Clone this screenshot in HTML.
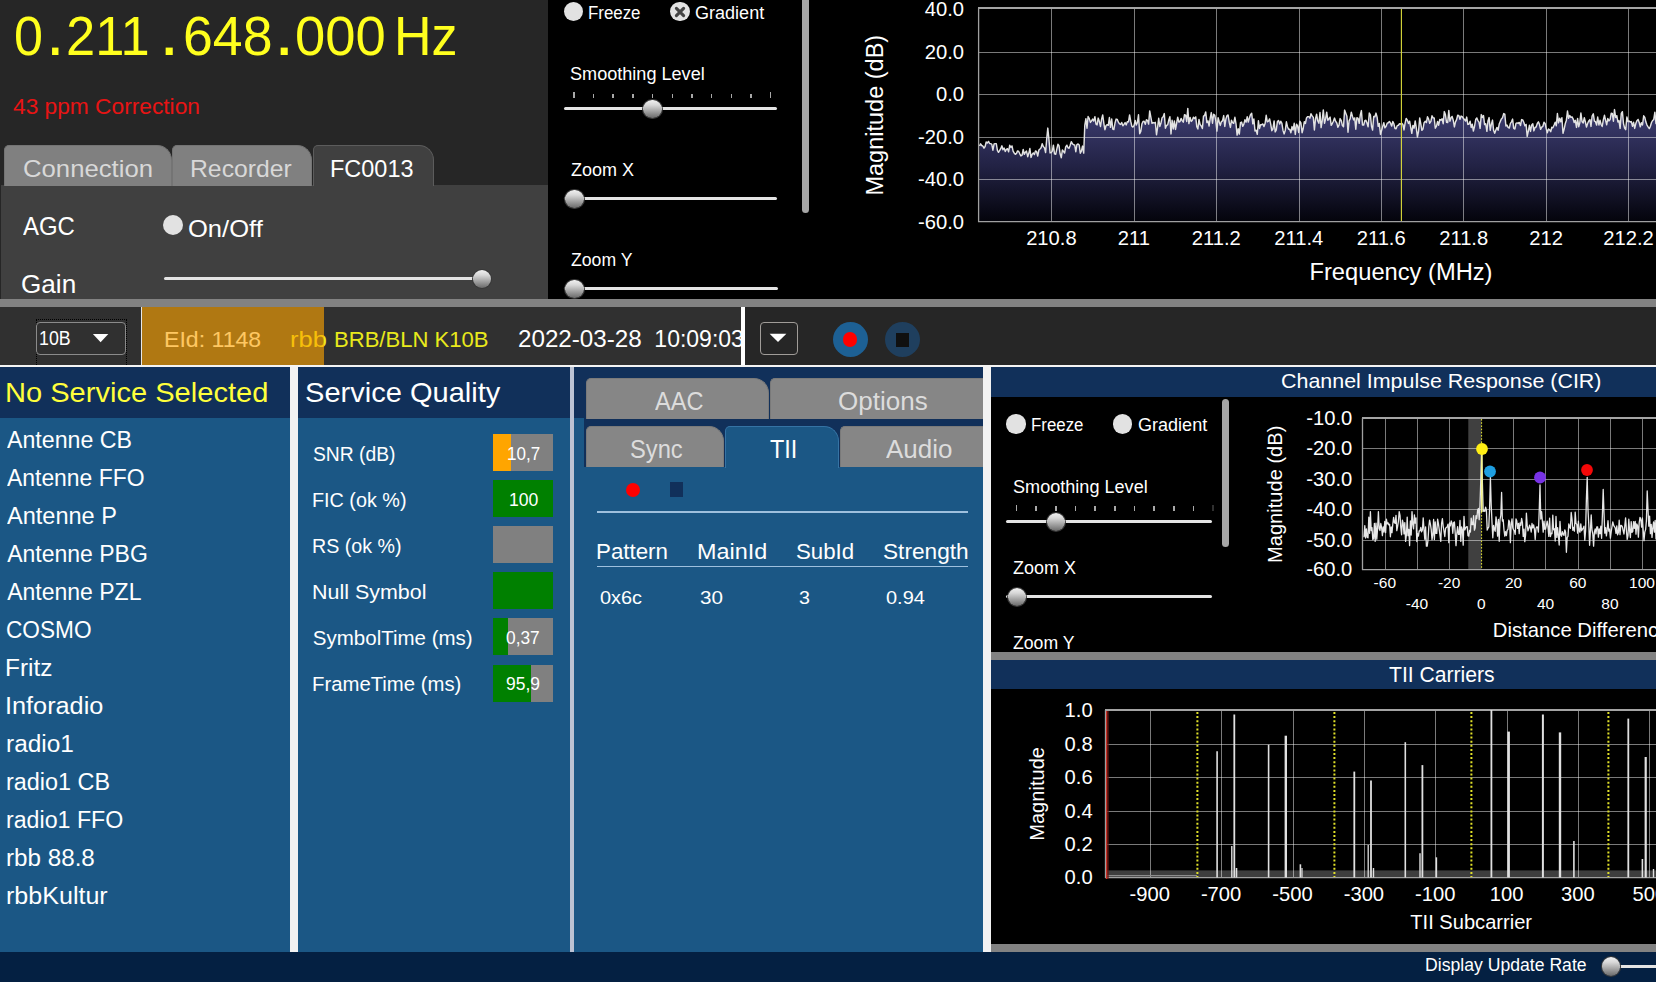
<!DOCTYPE html>
<html lang="en"><head><meta charset="utf-8"><title>DAB Radio</title><style>
html,body{margin:0;padding:0}
body{width:1656px;height:982px;position:relative;overflow:hidden;background:#000;font-family:"Liberation Sans",sans-serif;color:#fff}
.tab{position:absolute;box-sizing:border-box;background:#808080;border:1px solid #747474;border-bottom:none;border-radius:5px 15px 0 0}
.tab.b{background:#868686;border-color:#7a7a7a}
.thumb{position:absolute;border-radius:50%;background:linear-gradient(180deg,#f0f0f0 0%,#d8d8d8 28%,#a4a4a4 62%,#6a6a6a 100%);box-shadow:0 0 0 1px #383838}
svg text{font-family:"Liberation Sans",sans-serif;fill:#fff}
</style></head>
<body>
<svg style="position:absolute;left:0;top:0" width="1656" height="982" viewBox="0 0 1656 982">
<defs><linearGradient id="sg" x1="0" y1="112" x2="0" y2="221" gradientUnits="userSpaceOnUse"><stop offset="0" stop-color="#3c3c70"/><stop offset="0.5" stop-color="#222244"/><stop offset="1" stop-color="#04040c"/></linearGradient><clipPath id="c1"><rect x="979" y="8" width="680" height="213"/></clipPath></defs>
<path d="M979.5 146.0 L980.6 143.8 L981.7 145.5 L982.9 146.2 L984.0 148.2 L985.1 146.5 L986.2 142.0 L987.3 143.0 L988.5 141.4 L989.6 143.5 L990.7 143.6 L991.8 144.3 L992.9 150.2 L994.1 144.0 L995.2 143.6 L996.3 143.6 L997.4 150.4 L998.5 152.3 L999.7 150.3 L1000.8 148.5 L1001.9 145.8 L1003.0 149.7 L1004.1 148.1 L1005.3 151.4 L1006.4 149.4 L1007.5 148.7 L1008.6 151.8 L1009.7 145.3 L1010.9 147.4 L1012.0 145.9 L1013.1 151.2 L1014.2 153.0 L1015.3 154.3 L1016.5 153.4 L1017.6 150.9 L1018.7 151.5 L1019.8 153.8 L1020.9 155.9 L1022.1 155.1 L1023.2 149.5 L1024.3 154.3 L1025.4 152.2 L1026.5 151.1 L1027.7 156.7 L1028.8 153.3 L1029.9 148.5 L1031.0 157.4 L1032.1 154.4 L1033.3 152.9 L1034.4 154.6 L1035.5 150.9 L1036.6 151.7 L1037.7 156.1 L1038.9 150.0 L1040.0 148.9 L1041.1 147.7 L1042.2 143.7 L1043.3 146.5 L1044.5 147.9 L1045.6 152.5 L1046.7 139.1 L1047.8 128.1 L1048.9 139.1 L1050.1 152.9 L1051.2 152.6 L1052.3 151.1 L1053.4 145.2 L1054.5 153.9 L1055.7 154.3 L1056.8 149.2 L1057.9 144.3 L1059.0 145.7 L1060.1 153.8 L1061.3 157.7 L1062.4 149.9 L1063.5 151.4 L1064.6 153.0 L1065.7 147.0 L1066.9 145.2 L1068.0 147.8 L1069.1 148.2 L1070.2 145.3 L1071.3 141.7 L1072.5 143.9 L1073.6 144.8 L1074.7 145.0 L1075.8 151.7 L1076.9 144.6 L1078.1 143.9 L1079.2 145.1 L1080.3 153.2 L1081.4 151.1 L1082.5 146.1 L1083.7 153.1 L1084.8 125.3 L1085.9 118.7 L1087.0 128.2 L1088.1 116.5 L1089.3 118.6 L1090.4 122.4 L1091.5 121.0 L1092.6 119.1 L1093.7 121.1 L1094.9 116.7 L1096.0 124.2 L1097.1 124.9 L1098.2 118.1 L1099.3 121.3 L1100.5 126.5 L1101.6 119.1 L1102.7 114.9 L1103.8 123.1 L1104.9 129.7 L1106.1 125.5 L1107.2 124.7 L1108.3 125.3 L1109.4 117.5 L1110.5 127.3 L1111.7 119.0 L1112.8 129.1 L1113.9 129.5 L1115.0 123.0 L1116.1 119.1 L1117.3 119.5 L1118.4 122.2 L1119.5 123.9 L1120.6 124.4 L1121.7 122.5 L1122.9 125.7 L1124.0 124.4 L1125.1 122.6 L1126.2 124.9 L1127.3 121.8 L1128.5 121.9 L1129.6 114.9 L1130.7 121.2 L1131.8 126.2 L1132.9 127.1 L1134.1 125.4 L1135.2 120.4 L1136.3 125.0 L1137.4 122.5 L1138.5 114.8 L1139.7 133.7 L1140.8 131.4 L1141.9 124.1 L1143.0 121.4 L1144.1 121.3 L1145.3 124.3 L1146.4 119.8 L1147.5 120.3 L1148.6 124.1 L1149.7 110.9 L1150.9 117.4 L1152.0 123.3 L1153.1 122.6 L1154.2 123.0 L1155.3 122.3 L1156.5 134.8 L1157.6 127.3 L1158.7 118.3 L1159.8 126.5 L1160.9 123.3 L1162.1 117.7 L1163.2 116.8 L1164.3 113.6 L1165.4 128.2 L1166.5 125.4 L1167.7 124.8 L1168.8 120.0 L1169.9 116.7 L1171.0 133.9 L1172.1 120.3 L1173.3 129.0 L1174.4 121.0 L1175.5 129.4 L1176.6 123.5 L1177.7 117.2 L1178.9 122.0 L1180.0 121.5 L1181.1 118.4 L1182.2 120.6 L1183.3 122.2 L1184.5 114.7 L1185.6 115.1 L1186.7 121.5 L1187.8 108.4 L1188.9 123.6 L1190.1 117.4 L1191.2 121.4 L1192.3 120.3 L1193.4 117.2 L1194.5 118.6 L1195.7 116.9 L1196.8 126.7 L1197.9 129.0 L1199.0 119.4 L1200.1 124.5 L1201.3 126.0 L1202.4 128.5 L1203.5 116.1 L1204.6 115.5 L1205.7 111.9 L1206.9 122.6 L1208.0 120.9 L1209.1 126.0 L1210.2 118.3 L1211.3 112.6 L1212.5 123.2 L1213.6 114.3 L1214.7 115.0 L1215.8 120.9 L1216.9 131.1 L1218.1 117.7 L1219.2 121.8 L1220.3 125.4 L1221.4 121.6 L1222.5 120.8 L1223.7 115.6 L1224.8 126.4 L1225.9 119.0 L1227.0 115.6 L1228.1 115.0 L1229.3 122.7 L1230.4 127.4 L1231.5 120.2 L1232.6 122.7 L1233.7 123.3 L1234.9 117.3 L1236.0 123.8 L1237.1 135.1 L1238.2 128.8 L1239.3 134.1 L1240.5 122.6 L1241.6 122.1 L1242.7 126.3 L1243.8 124.4 L1244.9 119.8 L1246.1 122.2 L1247.2 116.8 L1248.3 122.0 L1249.4 117.9 L1250.5 114.7 L1251.7 113.3 L1252.8 123.8 L1253.9 119.0 L1255.0 131.0 L1256.1 130.2 L1257.3 134.3 L1258.4 120.8 L1259.5 128.5 L1260.6 124.7 L1261.7 124.7 L1262.9 124.0 L1264.0 126.6 L1265.1 123.5 L1266.2 115.3 L1267.3 121.8 L1268.5 121.2 L1269.6 118.9 L1270.7 124.2 L1271.8 130.7 L1272.9 129.0 L1274.1 120.9 L1275.2 131.9 L1276.3 129.8 L1277.4 121.6 L1278.5 120.6 L1279.7 124.1 L1280.8 121.2 L1281.9 123.4 L1283.0 130.4 L1284.1 133.9 L1285.3 130.3 L1286.4 121.8 L1287.5 126.7 L1288.6 129.3 L1289.7 129.2 L1290.9 132.7 L1292.0 126.6 L1293.1 130.0 L1294.2 123.3 L1295.3 134.4 L1296.5 124.2 L1297.6 126.0 L1298.7 132.5 L1299.8 121.2 L1300.9 123.0 L1302.1 132.7 L1303.2 128.5 L1304.3 121.7 L1305.4 123.5 L1306.5 117.9 L1307.7 116.6 L1308.8 116.6 L1309.9 118.2 L1311.0 113.8 L1312.1 115.9 L1313.3 117.4 L1314.4 130.0 L1315.5 118.9 L1316.6 114.2 L1317.7 120.8 L1318.9 123.3 L1320.0 112.5 L1321.1 127.6 L1322.2 120.8 L1323.3 109.9 L1324.5 123.2 L1325.6 118.9 L1326.7 112.2 L1327.8 120.2 L1328.9 119.0 L1330.1 117.1 L1331.2 125.3 L1332.3 123.5 L1333.4 121.2 L1334.5 118.1 L1335.7 121.4 L1336.8 123.0 L1337.9 127.3 L1339.0 125.1 L1340.1 118.6 L1341.3 120.6 L1342.4 125.6 L1343.5 126.7 L1344.6 110.1 L1345.7 113.1 L1346.9 116.2 L1348.0 132.3 L1349.1 120.9 L1350.2 118.6 L1351.3 112.2 L1352.5 116.5 L1353.6 119.9 L1354.7 117.9 L1355.8 129.2 L1356.9 117.7 L1358.1 118.3 L1359.2 123.3 L1360.3 115.0 L1361.4 110.6 L1362.5 125.0 L1363.7 125.1 L1364.8 120.7 L1365.9 120.3 L1367.0 123.1 L1368.1 126.7 L1369.3 113.0 L1370.4 114.9 L1371.5 126.2 L1372.6 130.0 L1373.7 116.5 L1374.9 116.8 L1376.0 113.1 L1377.1 117.1 L1378.2 126.4 L1379.3 123.4 L1380.5 134.4 L1381.6 130.5 L1382.7 126.4 L1383.8 122.7 L1384.9 127.8 L1386.1 126.3 L1387.2 123.2 L1388.3 122.8 L1389.4 121.5 L1390.5 123.2 L1391.7 126.1 L1392.8 121.5 L1393.9 123.8 L1395.0 128.5 L1396.1 128.7 L1397.3 125.6 L1398.4 125.3 L1399.5 123.8 L1400.6 124.1 L1401.7 123.2 L1402.9 124.4 L1404.0 129.9 L1405.1 123.2 L1406.2 118.4 L1407.3 120.1 L1408.5 123.4 L1409.6 121.2 L1410.7 127.3 L1411.8 133.3 L1412.9 125.4 L1414.1 128.2 L1415.2 120.9 L1416.3 127.8 L1417.4 137.0 L1418.5 131.7 L1419.7 118.0 L1420.8 124.0 L1421.9 130.3 L1423.0 129.0 L1424.1 122.7 L1425.3 121.3 L1426.4 122.6 L1427.5 116.7 L1428.6 119.1 L1429.7 123.2 L1430.9 121.3 L1432.0 115.8 L1433.1 117.8 L1434.2 118.0 L1435.3 128.2 L1436.5 126.2 L1437.6 121.5 L1438.7 125.2 L1439.8 119.5 L1440.9 120.2 L1442.1 118.8 L1443.2 123.7 L1444.3 111.6 L1445.4 114.6 L1446.5 122.2 L1447.7 122.5 L1448.8 110.4 L1449.9 121.2 L1451.0 117.9 L1452.1 116.4 L1453.3 120.5 L1454.4 126.9 L1455.5 121.9 L1456.6 119.6 L1457.7 115.2 L1458.9 115.7 L1460.0 119.3 L1461.1 116.1 L1462.2 116.7 L1463.3 118.4 L1464.5 119.5 L1465.6 121.1 L1466.7 117.1 L1467.8 124.4 L1468.9 124.2 L1470.1 121.2 L1471.2 127.5 L1472.3 124.3 L1473.4 131.1 L1474.5 126.5 L1475.7 119.5 L1476.8 117.9 L1477.9 120.6 L1479.0 122.2 L1480.1 128.4 L1481.3 114.6 L1482.4 117.5 L1483.5 115.6 L1484.6 124.6 L1485.7 123.7 L1486.9 131.3 L1488.0 120.9 L1489.1 117.6 L1490.2 130.3 L1491.3 124.7 L1492.5 120.1 L1493.6 130.3 L1494.7 133.2 L1495.8 130.2 L1496.9 127.4 L1498.1 130.3 L1499.2 124.1 L1500.3 121.4 L1501.4 118.9 L1502.5 117.8 L1503.7 113.6 L1504.8 114.1 L1505.9 126.0 L1507.0 125.1 L1508.1 127.4 L1509.3 128.1 L1510.4 123.4 L1511.5 121.8 L1512.6 119.1 L1513.7 128.4 L1514.9 129.0 L1516.0 123.4 L1517.1 122.9 L1518.2 123.4 L1519.3 122.4 L1520.5 125.6 L1521.6 119.6 L1522.7 119.9 L1523.8 122.2 L1524.9 125.7 L1526.1 124.4 L1527.2 136.4 L1528.3 131.3 L1529.4 125.3 L1530.5 131.4 L1531.7 124.9 L1532.8 123.8 L1533.9 130.9 L1535.0 127.5 L1536.1 127.0 L1537.3 123.4 L1538.4 121.8 L1539.5 124.6 L1540.6 129.3 L1541.7 127.2 L1542.9 126.3 L1544.0 122.3 L1545.1 123.4 L1546.2 128.5 L1547.3 132.7 L1548.5 129.0 L1549.6 129.8 L1550.7 131.7 L1551.8 127.3 L1552.9 127.8 L1554.1 125.0 L1555.2 122.2 L1556.3 125.8 L1557.4 113.5 L1558.5 122.9 L1559.7 118.3 L1560.8 121.7 L1561.9 117.7 L1563.0 133.3 L1564.1 129.3 L1565.3 123.5 L1566.4 120.2 L1567.5 111.0 L1568.6 118.3 L1569.7 115.5 L1570.9 117.3 L1572.0 116.8 L1573.1 118.8 L1574.2 122.5 L1575.3 120.3 L1576.5 127.4 L1577.6 118.4 L1578.7 126.7 L1579.8 122.8 L1580.9 113.0 L1582.1 121.8 L1583.2 122.9 L1584.3 117.8 L1585.4 122.0 L1586.5 127.1 L1587.7 123.3 L1588.8 120.9 L1589.9 119.6 L1591.0 126.4 L1592.1 116.0 L1593.3 113.8 L1594.4 121.1 L1595.5 121.7 L1596.6 125.1 L1597.7 117.0 L1598.9 125.0 L1600.0 120.3 L1601.1 124.5 L1602.2 126.5 L1603.3 120.0 L1604.5 115.3 L1605.6 120.4 L1606.7 124.7 L1607.8 118.5 L1608.9 120.9 L1610.1 119.6 L1611.2 113.3 L1612.3 113.4 L1613.4 121.2 L1614.5 109.6 L1615.7 117.5 L1616.8 115.7 L1617.9 122.0 L1619.0 120.6 L1620.1 128.4 L1621.3 113.4 L1622.4 111.7 L1623.5 123.6 L1624.6 128.0 L1625.7 129.7 L1626.9 116.9 L1628.0 121.6 L1629.1 121.0 L1630.2 122.1 L1631.3 121.6 L1632.5 126.3 L1633.6 122.3 L1634.7 128.4 L1635.8 123.6 L1636.9 120.7 L1638.1 119.4 L1639.2 122.5 L1640.3 126.7 L1641.4 122.7 L1642.5 125.0 L1643.7 115.8 L1644.8 117.4 L1645.9 122.1 L1647.0 125.1 L1648.1 126.9 L1649.3 128.6 L1650.4 126.2 L1651.5 122.5 L1652.6 120.5 L1653.7 119.7 L1654.9 112.2 L1656.0 123.6 L1657.1 123.0 L1660 221 L979.5 221 Z" fill="url(#sg)"/>
<path d="M979 52.5H1656M979 94.5H1656M979 137.5H1656M979 179.5H1656M1051.5 9V221M1134.5 9V221M1216.5 9V221M1299.5 9V221M1381.5 9V221M1463.5 9V221M1546.5 9V221M1628.5 9V221" stroke="rgba(255,255,255,0.48)" stroke-width="1" fill="none"/>
<path d="M978 8H1656" stroke="#a4a4a4" stroke-width="2" fill="none"/><path d="M978.6 8V222M978 221.6H1656" stroke="#a0a0a0" stroke-width="1.3" fill="none"/>
<path d="M979.5 146.0 L980.6 143.8 L981.7 145.5 L982.9 146.2 L984.0 148.2 L985.1 146.5 L986.2 142.0 L987.3 143.0 L988.5 141.4 L989.6 143.5 L990.7 143.6 L991.8 144.3 L992.9 150.2 L994.1 144.0 L995.2 143.6 L996.3 143.6 L997.4 150.4 L998.5 152.3 L999.7 150.3 L1000.8 148.5 L1001.9 145.8 L1003.0 149.7 L1004.1 148.1 L1005.3 151.4 L1006.4 149.4 L1007.5 148.7 L1008.6 151.8 L1009.7 145.3 L1010.9 147.4 L1012.0 145.9 L1013.1 151.2 L1014.2 153.0 L1015.3 154.3 L1016.5 153.4 L1017.6 150.9 L1018.7 151.5 L1019.8 153.8 L1020.9 155.9 L1022.1 155.1 L1023.2 149.5 L1024.3 154.3 L1025.4 152.2 L1026.5 151.1 L1027.7 156.7 L1028.8 153.3 L1029.9 148.5 L1031.0 157.4 L1032.1 154.4 L1033.3 152.9 L1034.4 154.6 L1035.5 150.9 L1036.6 151.7 L1037.7 156.1 L1038.9 150.0 L1040.0 148.9 L1041.1 147.7 L1042.2 143.7 L1043.3 146.5 L1044.5 147.9 L1045.6 152.5 L1046.7 139.1 L1047.8 128.1 L1048.9 139.1 L1050.1 152.9 L1051.2 152.6 L1052.3 151.1 L1053.4 145.2 L1054.5 153.9 L1055.7 154.3 L1056.8 149.2 L1057.9 144.3 L1059.0 145.7 L1060.1 153.8 L1061.3 157.7 L1062.4 149.9 L1063.5 151.4 L1064.6 153.0 L1065.7 147.0 L1066.9 145.2 L1068.0 147.8 L1069.1 148.2 L1070.2 145.3 L1071.3 141.7 L1072.5 143.9 L1073.6 144.8 L1074.7 145.0 L1075.8 151.7 L1076.9 144.6 L1078.1 143.9 L1079.2 145.1 L1080.3 153.2 L1081.4 151.1 L1082.5 146.1 L1083.7 153.1 L1084.8 125.3 L1085.9 118.7 L1087.0 128.2 L1088.1 116.5 L1089.3 118.6 L1090.4 122.4 L1091.5 121.0 L1092.6 119.1 L1093.7 121.1 L1094.9 116.7 L1096.0 124.2 L1097.1 124.9 L1098.2 118.1 L1099.3 121.3 L1100.5 126.5 L1101.6 119.1 L1102.7 114.9 L1103.8 123.1 L1104.9 129.7 L1106.1 125.5 L1107.2 124.7 L1108.3 125.3 L1109.4 117.5 L1110.5 127.3 L1111.7 119.0 L1112.8 129.1 L1113.9 129.5 L1115.0 123.0 L1116.1 119.1 L1117.3 119.5 L1118.4 122.2 L1119.5 123.9 L1120.6 124.4 L1121.7 122.5 L1122.9 125.7 L1124.0 124.4 L1125.1 122.6 L1126.2 124.9 L1127.3 121.8 L1128.5 121.9 L1129.6 114.9 L1130.7 121.2 L1131.8 126.2 L1132.9 127.1 L1134.1 125.4 L1135.2 120.4 L1136.3 125.0 L1137.4 122.5 L1138.5 114.8 L1139.7 133.7 L1140.8 131.4 L1141.9 124.1 L1143.0 121.4 L1144.1 121.3 L1145.3 124.3 L1146.4 119.8 L1147.5 120.3 L1148.6 124.1 L1149.7 110.9 L1150.9 117.4 L1152.0 123.3 L1153.1 122.6 L1154.2 123.0 L1155.3 122.3 L1156.5 134.8 L1157.6 127.3 L1158.7 118.3 L1159.8 126.5 L1160.9 123.3 L1162.1 117.7 L1163.2 116.8 L1164.3 113.6 L1165.4 128.2 L1166.5 125.4 L1167.7 124.8 L1168.8 120.0 L1169.9 116.7 L1171.0 133.9 L1172.1 120.3 L1173.3 129.0 L1174.4 121.0 L1175.5 129.4 L1176.6 123.5 L1177.7 117.2 L1178.9 122.0 L1180.0 121.5 L1181.1 118.4 L1182.2 120.6 L1183.3 122.2 L1184.5 114.7 L1185.6 115.1 L1186.7 121.5 L1187.8 108.4 L1188.9 123.6 L1190.1 117.4 L1191.2 121.4 L1192.3 120.3 L1193.4 117.2 L1194.5 118.6 L1195.7 116.9 L1196.8 126.7 L1197.9 129.0 L1199.0 119.4 L1200.1 124.5 L1201.3 126.0 L1202.4 128.5 L1203.5 116.1 L1204.6 115.5 L1205.7 111.9 L1206.9 122.6 L1208.0 120.9 L1209.1 126.0 L1210.2 118.3 L1211.3 112.6 L1212.5 123.2 L1213.6 114.3 L1214.7 115.0 L1215.8 120.9 L1216.9 131.1 L1218.1 117.7 L1219.2 121.8 L1220.3 125.4 L1221.4 121.6 L1222.5 120.8 L1223.7 115.6 L1224.8 126.4 L1225.9 119.0 L1227.0 115.6 L1228.1 115.0 L1229.3 122.7 L1230.4 127.4 L1231.5 120.2 L1232.6 122.7 L1233.7 123.3 L1234.9 117.3 L1236.0 123.8 L1237.1 135.1 L1238.2 128.8 L1239.3 134.1 L1240.5 122.6 L1241.6 122.1 L1242.7 126.3 L1243.8 124.4 L1244.9 119.8 L1246.1 122.2 L1247.2 116.8 L1248.3 122.0 L1249.4 117.9 L1250.5 114.7 L1251.7 113.3 L1252.8 123.8 L1253.9 119.0 L1255.0 131.0 L1256.1 130.2 L1257.3 134.3 L1258.4 120.8 L1259.5 128.5 L1260.6 124.7 L1261.7 124.7 L1262.9 124.0 L1264.0 126.6 L1265.1 123.5 L1266.2 115.3 L1267.3 121.8 L1268.5 121.2 L1269.6 118.9 L1270.7 124.2 L1271.8 130.7 L1272.9 129.0 L1274.1 120.9 L1275.2 131.9 L1276.3 129.8 L1277.4 121.6 L1278.5 120.6 L1279.7 124.1 L1280.8 121.2 L1281.9 123.4 L1283.0 130.4 L1284.1 133.9 L1285.3 130.3 L1286.4 121.8 L1287.5 126.7 L1288.6 129.3 L1289.7 129.2 L1290.9 132.7 L1292.0 126.6 L1293.1 130.0 L1294.2 123.3 L1295.3 134.4 L1296.5 124.2 L1297.6 126.0 L1298.7 132.5 L1299.8 121.2 L1300.9 123.0 L1302.1 132.7 L1303.2 128.5 L1304.3 121.7 L1305.4 123.5 L1306.5 117.9 L1307.7 116.6 L1308.8 116.6 L1309.9 118.2 L1311.0 113.8 L1312.1 115.9 L1313.3 117.4 L1314.4 130.0 L1315.5 118.9 L1316.6 114.2 L1317.7 120.8 L1318.9 123.3 L1320.0 112.5 L1321.1 127.6 L1322.2 120.8 L1323.3 109.9 L1324.5 123.2 L1325.6 118.9 L1326.7 112.2 L1327.8 120.2 L1328.9 119.0 L1330.1 117.1 L1331.2 125.3 L1332.3 123.5 L1333.4 121.2 L1334.5 118.1 L1335.7 121.4 L1336.8 123.0 L1337.9 127.3 L1339.0 125.1 L1340.1 118.6 L1341.3 120.6 L1342.4 125.6 L1343.5 126.7 L1344.6 110.1 L1345.7 113.1 L1346.9 116.2 L1348.0 132.3 L1349.1 120.9 L1350.2 118.6 L1351.3 112.2 L1352.5 116.5 L1353.6 119.9 L1354.7 117.9 L1355.8 129.2 L1356.9 117.7 L1358.1 118.3 L1359.2 123.3 L1360.3 115.0 L1361.4 110.6 L1362.5 125.0 L1363.7 125.1 L1364.8 120.7 L1365.9 120.3 L1367.0 123.1 L1368.1 126.7 L1369.3 113.0 L1370.4 114.9 L1371.5 126.2 L1372.6 130.0 L1373.7 116.5 L1374.9 116.8 L1376.0 113.1 L1377.1 117.1 L1378.2 126.4 L1379.3 123.4 L1380.5 134.4 L1381.6 130.5 L1382.7 126.4 L1383.8 122.7 L1384.9 127.8 L1386.1 126.3 L1387.2 123.2 L1388.3 122.8 L1389.4 121.5 L1390.5 123.2 L1391.7 126.1 L1392.8 121.5 L1393.9 123.8 L1395.0 128.5 L1396.1 128.7 L1397.3 125.6 L1398.4 125.3 L1399.5 123.8 L1400.6 124.1 L1401.7 123.2 L1402.9 124.4 L1404.0 129.9 L1405.1 123.2 L1406.2 118.4 L1407.3 120.1 L1408.5 123.4 L1409.6 121.2 L1410.7 127.3 L1411.8 133.3 L1412.9 125.4 L1414.1 128.2 L1415.2 120.9 L1416.3 127.8 L1417.4 137.0 L1418.5 131.7 L1419.7 118.0 L1420.8 124.0 L1421.9 130.3 L1423.0 129.0 L1424.1 122.7 L1425.3 121.3 L1426.4 122.6 L1427.5 116.7 L1428.6 119.1 L1429.7 123.2 L1430.9 121.3 L1432.0 115.8 L1433.1 117.8 L1434.2 118.0 L1435.3 128.2 L1436.5 126.2 L1437.6 121.5 L1438.7 125.2 L1439.8 119.5 L1440.9 120.2 L1442.1 118.8 L1443.2 123.7 L1444.3 111.6 L1445.4 114.6 L1446.5 122.2 L1447.7 122.5 L1448.8 110.4 L1449.9 121.2 L1451.0 117.9 L1452.1 116.4 L1453.3 120.5 L1454.4 126.9 L1455.5 121.9 L1456.6 119.6 L1457.7 115.2 L1458.9 115.7 L1460.0 119.3 L1461.1 116.1 L1462.2 116.7 L1463.3 118.4 L1464.5 119.5 L1465.6 121.1 L1466.7 117.1 L1467.8 124.4 L1468.9 124.2 L1470.1 121.2 L1471.2 127.5 L1472.3 124.3 L1473.4 131.1 L1474.5 126.5 L1475.7 119.5 L1476.8 117.9 L1477.9 120.6 L1479.0 122.2 L1480.1 128.4 L1481.3 114.6 L1482.4 117.5 L1483.5 115.6 L1484.6 124.6 L1485.7 123.7 L1486.9 131.3 L1488.0 120.9 L1489.1 117.6 L1490.2 130.3 L1491.3 124.7 L1492.5 120.1 L1493.6 130.3 L1494.7 133.2 L1495.8 130.2 L1496.9 127.4 L1498.1 130.3 L1499.2 124.1 L1500.3 121.4 L1501.4 118.9 L1502.5 117.8 L1503.7 113.6 L1504.8 114.1 L1505.9 126.0 L1507.0 125.1 L1508.1 127.4 L1509.3 128.1 L1510.4 123.4 L1511.5 121.8 L1512.6 119.1 L1513.7 128.4 L1514.9 129.0 L1516.0 123.4 L1517.1 122.9 L1518.2 123.4 L1519.3 122.4 L1520.5 125.6 L1521.6 119.6 L1522.7 119.9 L1523.8 122.2 L1524.9 125.7 L1526.1 124.4 L1527.2 136.4 L1528.3 131.3 L1529.4 125.3 L1530.5 131.4 L1531.7 124.9 L1532.8 123.8 L1533.9 130.9 L1535.0 127.5 L1536.1 127.0 L1537.3 123.4 L1538.4 121.8 L1539.5 124.6 L1540.6 129.3 L1541.7 127.2 L1542.9 126.3 L1544.0 122.3 L1545.1 123.4 L1546.2 128.5 L1547.3 132.7 L1548.5 129.0 L1549.6 129.8 L1550.7 131.7 L1551.8 127.3 L1552.9 127.8 L1554.1 125.0 L1555.2 122.2 L1556.3 125.8 L1557.4 113.5 L1558.5 122.9 L1559.7 118.3 L1560.8 121.7 L1561.9 117.7 L1563.0 133.3 L1564.1 129.3 L1565.3 123.5 L1566.4 120.2 L1567.5 111.0 L1568.6 118.3 L1569.7 115.5 L1570.9 117.3 L1572.0 116.8 L1573.1 118.8 L1574.2 122.5 L1575.3 120.3 L1576.5 127.4 L1577.6 118.4 L1578.7 126.7 L1579.8 122.8 L1580.9 113.0 L1582.1 121.8 L1583.2 122.9 L1584.3 117.8 L1585.4 122.0 L1586.5 127.1 L1587.7 123.3 L1588.8 120.9 L1589.9 119.6 L1591.0 126.4 L1592.1 116.0 L1593.3 113.8 L1594.4 121.1 L1595.5 121.7 L1596.6 125.1 L1597.7 117.0 L1598.9 125.0 L1600.0 120.3 L1601.1 124.5 L1602.2 126.5 L1603.3 120.0 L1604.5 115.3 L1605.6 120.4 L1606.7 124.7 L1607.8 118.5 L1608.9 120.9 L1610.1 119.6 L1611.2 113.3 L1612.3 113.4 L1613.4 121.2 L1614.5 109.6 L1615.7 117.5 L1616.8 115.7 L1617.9 122.0 L1619.0 120.6 L1620.1 128.4 L1621.3 113.4 L1622.4 111.7 L1623.5 123.6 L1624.6 128.0 L1625.7 129.7 L1626.9 116.9 L1628.0 121.6 L1629.1 121.0 L1630.2 122.1 L1631.3 121.6 L1632.5 126.3 L1633.6 122.3 L1634.7 128.4 L1635.8 123.6 L1636.9 120.7 L1638.1 119.4 L1639.2 122.5 L1640.3 126.7 L1641.4 122.7 L1642.5 125.0 L1643.7 115.8 L1644.8 117.4 L1645.9 122.1 L1647.0 125.1 L1648.1 126.9 L1649.3 128.6 L1650.4 126.2 L1651.5 122.5 L1652.6 120.5 L1653.7 119.7 L1654.9 112.2 L1656.0 123.6 L1657.1 123.0" stroke="#e2e2e2" stroke-width="1.45" fill="none" stroke-linejoin="round" clip-path="url(#c1)"/>
<path d="M1401.4 9V221" stroke="#dcdc3c" stroke-width="1.1"/>
<text x="964.0" y="16.4" font-size="20.2" text-anchor="end" >40.0</text>
<text x="964.0" y="58.9" font-size="20.2" text-anchor="end" >20.0</text>
<text x="964.0" y="101.4" font-size="20.2" text-anchor="end" >0.0</text>
<text x="964.0" y="143.9" font-size="20.2" text-anchor="end" >-20.0</text>
<text x="964.0" y="186.4" font-size="20.2" text-anchor="end" >-40.0</text>
<text x="964.0" y="228.9" font-size="20.2" text-anchor="end" >-60.0</text>
<text x="1051.4" y="244.8" font-size="20.2" text-anchor="middle" >210.8</text>
<text x="1133.9" y="244.8" font-size="20.2" text-anchor="middle" >211</text>
<text x="1216.3" y="244.8" font-size="20.2" text-anchor="middle" >211.2</text>
<text x="1298.8" y="244.8" font-size="20.2" text-anchor="middle" >211.4</text>
<text x="1381.2" y="244.8" font-size="20.2" text-anchor="middle" >211.6</text>
<text x="1463.7" y="244.8" font-size="20.2" text-anchor="middle" >211.8</text>
<text x="1546.1" y="244.8" font-size="20.2" text-anchor="middle" >212</text>
<text x="1628.5" y="244.8" font-size="20.2" text-anchor="middle" >212.2</text>
<text x="1401.0" y="279.5" font-size="23.7" text-anchor="middle" >Frequency (MHz)</text>
<text transform="translate(883.4,115.2) rotate(-90)" font-size="23.5" text-anchor="middle">Magnitude (dB)</text>
<defs><clipPath id="c2"><rect x="1363" y="418.6" width="300" height="151"/></clipPath></defs>
<rect x="1468.3" y="419" width="13.2" height="150" fill="#404040"/>
<path d="M1363 448.5H1656M1363 479.5H1656M1363 509.5H1656M1363 540.5H1656M1385.5 419V569.5M1417.5 419V569.5M1449.5 419V569.5M1513.5 419V569.5M1545.5 419V569.5M1578.5 419V569.5M1610.5 419V569.5M1642.5 419V569.5" stroke="rgba(255,255,255,0.48)" stroke-width="1" fill="none"/>
<path d="M1362 418H1656" stroke="#a4a4a4" stroke-width="2" fill="none"/><path d="M1362.5 418V570M1362 569.6H1656" stroke="#a0a0a0" stroke-width="1.3" fill="none"/>
<path d="M1364.0 537.3 L1364.8 525.6 L1365.6 538.0 L1366.4 528.8 L1367.2 537.2 L1368.0 537.8 L1368.8 517.2 L1369.6 533.3 L1370.4 511.6 L1371.2 530.5 L1372.0 527.7 L1372.8 539.5 L1373.6 538.5 L1374.4 523.3 L1375.2 541.4 L1376.0 523.2 L1376.8 539.1 L1377.6 528.3 L1378.4 511.6 L1379.2 528.7 L1380.0 530.5 L1380.8 523.5 L1381.6 527.6 L1382.4 535.7 L1383.2 526.9 L1384.0 532.0 L1384.8 521.4 L1385.6 532.7 L1386.4 519.1 L1387.2 523.8 L1388.0 522.8 L1388.8 524.9 L1389.6 524.3 L1390.4 536.8 L1391.2 527.0 L1392.0 532.7 L1392.8 524.0 L1393.6 517.3 L1394.4 522.7 L1395.2 523.3 L1396.0 515.4 L1396.8 530.7 L1397.6 526.6 L1398.4 521.3 L1399.2 511.6 L1400.0 515.4 L1400.8 527.4 L1401.6 534.8 L1402.4 520.2 L1403.2 523.2 L1404.0 533.9 L1404.8 522.6 L1405.6 541.4 L1406.4 535.0 L1407.2 517.1 L1408.0 535.7 L1408.8 529.5 L1409.6 545.6 L1410.4 521.0 L1411.2 535.0 L1412.0 511.6 L1412.8 523.8 L1413.6 528.9 L1414.4 514.8 L1415.2 523.1 L1416.0 518.0 L1416.8 541.6 L1417.6 533.6 L1418.4 536.2 L1419.2 530.8 L1420.0 530.8 L1420.8 527.5 L1421.6 531.8 L1422.4 530.0 L1423.2 517.8 L1424.0 529.7 L1424.8 539.3 L1425.6 526.8 L1426.4 546.2 L1427.2 546.2 L1428.0 540.1 L1428.8 527.0 L1429.6 520.2 L1430.4 524.2 L1431.2 529.3 L1432.0 539.7 L1432.8 535.0 L1433.6 519.5 L1434.4 539.5 L1435.2 521.9 L1436.0 533.4 L1436.8 533.4 L1437.6 519.2 L1438.4 523.3 L1439.2 529.3 L1440.0 535.5 L1440.8 541.3 L1441.6 523.3 L1442.4 518.6 L1443.2 526.5 L1444.0 531.1 L1444.8 536.5 L1445.6 528.4 L1446.4 527.3 L1447.2 527.0 L1448.0 524.1 L1448.8 542.7 L1449.6 522.9 L1450.4 525.9 L1451.2 521.0 L1452.0 523.1 L1452.8 533.3 L1453.6 522.7 L1454.4 521.9 L1455.2 532.7 L1456.0 545.7 L1456.8 533.9 L1457.6 526.6 L1458.4 534.3 L1459.2 534.4 L1460.0 520.4 L1460.8 541.4 L1461.6 526.9 L1462.4 529.9 L1463.2 545.2 L1464.0 516.3 L1464.8 529.9 L1465.6 527.9 L1466.4 526.9 L1467.2 526.6 L1468.0 535.6 L1468.8 536.1 L1469.6 530.3 L1470.4 532.1 L1471.2 518.1 L1472.0 524.5 L1472.8 524.6 L1473.6 515.7 L1474.4 530.2 L1475.2 527.7 L1476.0 515.7 L1476.8 518.7 L1477.6 510.2 L1478.4 508.5 L1479.2 519.7 L1480.0 505.0 L1480.8 479.7 L1481.6 449.9 L1482.4 482.9 L1483.2 511.3 L1484.0 510.3 L1484.8 511.4 L1485.6 507.1 L1486.4 510.1 L1487.2 530.1 L1488.0 528.2 L1488.8 527.0 L1489.6 508.3 L1490.4 477.3 L1491.2 504.9 L1492.0 522.4 L1492.8 537.8 L1493.6 525.4 L1494.4 529.3 L1495.2 531.3 L1496.0 516.9 L1496.8 523.2 L1497.6 536.1 L1498.4 519.5 L1499.2 541.3 L1500.0 519.6 L1500.8 515.5 L1501.6 492.5 L1502.4 521.0 L1503.2 519.7 L1504.0 530.0 L1504.8 536.2 L1505.6 531.6 L1506.4 535.7 L1507.2 530.2 L1508.0 529.3 L1508.8 520.2 L1509.6 522.1 L1510.4 542.7 L1511.2 524.7 L1512.0 518.9 L1512.8 528.1 L1513.6 529.9 L1514.4 530.8 L1515.2 534.3 L1516.0 519.0 L1516.8 521.1 L1517.6 528.4 L1518.4 523.5 L1519.2 533.7 L1520.0 523.0 L1520.8 525.4 L1521.6 518.5 L1522.4 522.4 L1523.2 536.4 L1524.0 529.1 L1524.8 541.6 L1525.6 534.9 L1526.4 513.2 L1527.2 525.4 L1528.0 530.9 L1528.8 528.5 L1529.6 525.1 L1530.4 527.4 L1531.2 532.0 L1532.0 523.5 L1532.8 527.8 L1533.6 524.8 L1534.4 529.1 L1535.2 539.5 L1536.0 528.5 L1536.8 526.8 L1537.6 527.1 L1538.4 532.1 L1539.2 511.3 L1540.0 484.9 L1540.8 519.0 L1541.6 511.7 L1542.4 521.5 L1543.2 532.2 L1544.0 521.1 L1544.8 529.3 L1545.6 529.1 L1546.4 525.0 L1547.2 521.1 L1548.0 526.9 L1548.8 536.4 L1549.6 518.1 L1550.4 536.5 L1551.2 533.5 L1552.0 533.7 L1552.8 515.2 L1553.6 529.8 L1554.4 528.8 L1555.2 541.0 L1556.0 516.4 L1556.8 537.4 L1557.6 527.6 L1558.4 535.8 L1559.2 545.0 L1560.0 521.5 L1560.8 534.9 L1561.6 536.2 L1562.4 531.7 L1563.2 534.1 L1564.0 535.4 L1564.8 529.8 L1565.6 532.1 L1566.4 552.3 L1567.2 537.3 L1568.0 536.3 L1568.8 523.8 L1569.6 526.9 L1570.4 528.4 L1571.2 512.5 L1572.0 519.1 L1572.8 530.3 L1573.6 527.3 L1574.4 531.1 L1575.2 512.2 L1576.0 523.6 L1576.8 524.2 L1577.6 533.1 L1578.4 521.2 L1579.2 530.9 L1580.0 532.3 L1580.8 523.9 L1581.6 530.8 L1582.4 529.2 L1583.2 528.3 L1584.0 526.2 L1584.8 540.3 L1585.6 530.6 L1586.4 498.8 L1587.2 477.3 L1588.0 509.7 L1588.8 524.8 L1589.6 545.3 L1590.4 530.9 L1591.2 515.0 L1592.0 530.1 L1592.8 534.1 L1593.6 546.2 L1594.4 532.1 L1595.2 529.0 L1596.0 533.8 L1596.8 526.8 L1597.6 526.8 L1598.4 537.2 L1599.2 528.9 L1600.0 533.7 L1600.8 526.2 L1601.6 538.3 L1602.4 514.7 L1603.2 489.4 L1604.0 513.0 L1604.8 533.1 L1605.6 527.6 L1606.4 535.9 L1607.2 529.4 L1608.0 520.7 L1608.8 531.1 L1609.6 529.1 L1610.4 538.1 L1611.2 531.6 L1612.0 526.7 L1612.8 521.9 L1613.6 525.1 L1614.4 526.7 L1615.2 527.8 L1616.0 533.4 L1616.8 525.8 L1617.6 534.9 L1618.4 532.5 L1619.2 520.2 L1620.0 534.6 L1620.8 525.3 L1621.6 525.7 L1622.4 526.9 L1623.2 530.8 L1624.0 534.0 L1624.8 525.9 L1625.6 517.9 L1626.4 530.1 L1627.2 539.4 L1628.0 535.7 L1628.8 519.2 L1629.6 530.7 L1630.4 537.5 L1631.2 521.7 L1632.0 532.4 L1632.8 531.4 L1633.6 521.6 L1634.4 528.3 L1635.2 521.4 L1636.0 534.1 L1636.8 523.9 L1637.6 525.7 L1638.4 537.1 L1639.2 522.9 L1640.0 517.3 L1640.8 519.7 L1641.6 527.1 L1642.4 518.0 L1643.2 530.6 L1644.0 540.7 L1644.8 532.1 L1645.6 529.6 L1646.4 520.9 L1647.2 491.0 L1648.0 509.6 L1648.8 526.1 L1649.6 516.1 L1650.4 533.6 L1651.2 524.3 L1652.0 537.4 L1652.8 528.0 L1653.6 521.9 L1654.4 532.2 L1655.2 520.4 L1656.0 538.9 L1656.8 518.3 L1657.6 531.1" stroke="#e6e6e6" stroke-width="1.3" fill="none" stroke-linejoin="round" clip-path="url(#c2)"/>
<path d="M1481.6 419V569.5" stroke="#e6e632" stroke-width="1" stroke-dasharray="1.6 1.6"/>
<path d="M1481.8 449V512" stroke="#f4f48a" stroke-width="1.6"/>
<circle cx="1482.0" cy="449.0" r="5.9" fill="#ffee14"/>
<circle cx="1490.0" cy="471.5" r="5.9" fill="#1e9ee0"/>
<circle cx="1540.0" cy="477.5" r="5.9" fill="#7832e6"/>
<circle cx="1587.0" cy="470.0" r="5.9" fill="#f40808"/>
<text x="1352.3" y="424.8" font-size="20.2" text-anchor="end" >-10.0</text>
<text x="1352.3" y="455.3" font-size="20.2" text-anchor="end" >-20.0</text>
<text x="1352.3" y="486.3" font-size="20.2" text-anchor="end" >-30.0</text>
<text x="1352.3" y="516.3" font-size="20.2" text-anchor="end" >-40.0</text>
<text x="1352.3" y="547.3" font-size="20.2" text-anchor="end" >-50.0</text>
<text x="1352.3" y="576.3" font-size="20.2" text-anchor="end" >-60.0</text>
<text x="1384.8" y="588.1" font-size="15.5" text-anchor="middle" >-60</text>
<text x="1449.1" y="588.1" font-size="15.5" text-anchor="middle" >-20</text>
<text x="1513.5" y="588.1" font-size="15.5" text-anchor="middle" >20</text>
<text x="1577.8" y="588.1" font-size="15.5" text-anchor="middle" >60</text>
<text x="1642.0" y="588.1" font-size="15.5" text-anchor="middle" >100</text>
<text x="1417.0" y="608.9" font-size="15.5" text-anchor="middle" >-40</text>
<text x="1481.3" y="608.9" font-size="15.5" text-anchor="middle" >0</text>
<text x="1545.6" y="608.9" font-size="15.5" text-anchor="middle" >40</text>
<text x="1609.9" y="608.9" font-size="15.5" text-anchor="middle" >80</text>
<text x="1492.8" y="636.8" font-size="20.3" text-anchor="start" >Distance Difference (km)</text>
<text transform="translate(1282,494.3) rotate(-90)" font-size="20.1" text-anchor="middle">Magnitude (dB)</text>
<rect x="1106" y="870.4" width="560" height="7.2" fill="#3e3e3e"/>
<path d="M1106 844.5H1656M1106 811.5H1656M1106 777.5H1656M1106 744.5H1656M1150.5 711V877.5M1221.5 711V877.5M1293.5 711V877.5M1364.5 711V877.5M1435.5 711V877.5M1507.5 711V877.5M1578.5 711V877.5M1649.5 711V877.5" stroke="rgba(255,255,255,0.48)" stroke-width="1" fill="none"/>
<path d="M1105 710H1656" stroke="#a4a4a4" stroke-width="2" fill="none"/><path d="M1105.5 710V878M1105 877.6H1656" stroke="#a0a0a0" stroke-width="1.3" fill="none"/>
<path d="M1106 875.6H1197" stroke="#8c8c8c" stroke-width="1.2"/>
<path d="M1197.4 712V877" stroke="#e0e028" stroke-width="2" stroke-dasharray="2 2.1"/>
<path d="M1334.4 712V877" stroke="#e0e028" stroke-width="2" stroke-dasharray="2 2.1"/>
<path d="M1471.4 712V877" stroke="#e0e028" stroke-width="2" stroke-dasharray="2 2.1"/>
<path d="M1608.4 712V877" stroke="#e0e028" stroke-width="2" stroke-dasharray="2 2.1"/>
<path d="M1217.1 877.5V751.2" stroke="#e0e0e0" stroke-width="1.6"/>
<path d="M1231.8 877.5V845.9" stroke="#e0e0e0" stroke-width="1.4"/>
<path d="M1234.3 877.5V714.5" stroke="#e0e0e0" stroke-width="1.8"/>
<path d="M1236.5 877.5V868.0" stroke="#e0e0e0" stroke-width="1.6"/>
<path d="M1268.6 877.5V744.7" stroke="#e0e0e0" stroke-width="1.6"/>
<path d="M1285.8 877.5V735.7" stroke="#e0e0e0" stroke-width="2.4"/>
<path d="M1300.4 877.5V864.3" stroke="#e0e0e0" stroke-width="1.6"/>
<path d="M1302.0 877.5V868.0" stroke="#e0e0e0" stroke-width="1.2"/>
<path d="M1354.3 877.5V771.6" stroke="#e0e0e0" stroke-width="1.8"/>
<path d="M1368.2 877.5V845.0" stroke="#e0e0e0" stroke-width="1.3"/>
<path d="M1371.0 877.5V780.6" stroke="#e0e0e0" stroke-width="1.8"/>
<path d="M1373.5 877.5V868.0" stroke="#e0e0e0" stroke-width="1.4"/>
<path d="M1405.3 877.5V742.2" stroke="#e0e0e0" stroke-width="1.6"/>
<path d="M1420.0 877.5V853.3" stroke="#e0e0e0" stroke-width="1.4"/>
<path d="M1422.4 877.5V765.1" stroke="#e0e0e0" stroke-width="1.8"/>
<path d="M1436.4 877.5V857.3" stroke="#e0e0e0" stroke-width="1.5"/>
<path d="M1491.4 877.5V710.0" stroke="#e0e0e0" stroke-width="1.8"/>
<path d="M1508.6 877.5V731.6" stroke="#e0e0e0" stroke-width="2.6"/>
<path d="M1542.9 877.5V714.5" stroke="#e0e0e0" stroke-width="2.0"/>
<path d="M1560.0 877.5V732.4" stroke="#e0e0e0" stroke-width="2.4"/>
<path d="M1573.9 877.5V841.0" stroke="#e0e0e0" stroke-width="1.6"/>
<path d="M1628.3 877.5V718.6" stroke="#e0e0e0" stroke-width="1.8"/>
<path d="M1642.4 877.5V859.0" stroke="#e0e0e0" stroke-width="1.6"/>
<path d="M1645.7 877.5V757.0" stroke="#e0e0e0" stroke-width="2.2"/>
<path d="M1653.5 877.5V869.0" stroke="#e0e0e0" stroke-width="1.4"/>
<path d="M1106.7 711V879" stroke="#cc3228" stroke-width="1.4"/><path d="M1108 711V879" stroke="#6e1410" stroke-width="1.2"/>
<text x="1092.7" y="884.2" font-size="20.2" text-anchor="end" >0.0</text>
<text x="1092.7" y="851.2" font-size="20.2" text-anchor="end" >0.2</text>
<text x="1092.7" y="818.2" font-size="20.2" text-anchor="end" >0.4</text>
<text x="1092.7" y="784.2" font-size="20.2" text-anchor="end" >0.6</text>
<text x="1092.7" y="751.2" font-size="20.2" text-anchor="end" >0.8</text>
<text x="1092.7" y="716.7" font-size="20.2" text-anchor="end" >1.0</text>
<text x="1149.8" y="901.4" font-size="20.2" text-anchor="middle" >-900</text>
<text x="1221.1" y="901.4" font-size="20.2" text-anchor="middle" >-700</text>
<text x="1292.5" y="901.4" font-size="20.2" text-anchor="middle" >-500</text>
<text x="1363.9" y="901.4" font-size="20.2" text-anchor="middle" >-300</text>
<text x="1435.2" y="901.4" font-size="20.2" text-anchor="middle" >-100</text>
<text x="1506.6" y="901.4" font-size="20.2" text-anchor="middle" >100</text>
<text x="1577.9" y="901.4" font-size="20.2" text-anchor="middle" >300</text>
<text x="1649.3" y="901.4" font-size="20.2" text-anchor="middle" >500</text>
<text x="1471.2" y="928.7" font-size="20.1" text-anchor="middle" >TII Subcarrier</text>
<text transform="translate(1044.4,793.9) rotate(-90)" font-size="20.1" text-anchor="middle">Magnitude</text>
</svg>
<section id="tuner-panel">
<div style="position:absolute;left:0.00px;top:0.00px;width:548.00px;height:299.00px;background:#262626;"></div>
<span style="position:absolute;left:14.34px;top:2px;font-size:56.00px;line-height:67px;color:#ffff1e;white-space:pre;transform-origin:0 0;transform:scaleX(0.9296);">0</span>
<span style="position:absolute;left:45.53px;top:-10px;font-size:68.00px;line-height:82px;color:#ffff1e;white-space:pre;transform-origin:0 0;transform:scaleX(0.9778);">.</span>
<span style="position:absolute;left:65.82px;top:2px;font-size:56.00px;line-height:67px;color:#ffff1e;white-space:pre;transform-origin:0 0;transform:scaleX(0.9369);">211</span>
<span style="position:absolute;left:158.71px;top:-10px;font-size:68.00px;line-height:82px;color:#ffff1e;white-space:pre;transform-origin:0 0;transform:scaleX(1.0815);">.</span>
<span style="position:absolute;left:182.87px;top:2px;font-size:56.00px;line-height:67px;color:#ffff1e;white-space:pre;transform-origin:0 0;transform:scaleX(0.9575);">648</span>
<span style="position:absolute;left:273.61px;top:-10px;font-size:68.00px;line-height:82px;color:#ffff1e;white-space:pre;transform-origin:0 0;transform:scaleX(1.0815);">.</span>
<span style="position:absolute;left:294.86px;top:2px;font-size:56.00px;line-height:67px;color:#ffff1e;white-space:pre;transform-origin:0 0;transform:scaleX(0.9714);">000</span>
<span style="position:absolute;left:394.42px;top:2px;font-size:56.00px;line-height:67px;color:#ffff1e;white-space:pre;transform-origin:0 0;transform:scaleX(0.9290);">Hz</span>
<span style="position:absolute;left:13.24px;top:94px;font-size:21.50px;line-height:26px;color:#e81414;white-space:pre;transform-origin:0 0;transform:scaleX(1.0570);">43 ppm Correction</span>
<div style="position:absolute;left:1.00px;top:185.00px;width:547.00px;height:114.00px;background:#404040;"></div>
<div class="tab" style="left:4px;top:145px;width:167.8px;height:40.5px"></div>
<div class="tab" style="left:171.6px;top:145px;width:140.2px;height:40.5px"></div>
<div class="tab sel" style="left:312.5px;top:145px;width:121px;height:41px;background:#404040;border-color:#5c5c5c"></div>
<span style="position:absolute;left:23.45px;top:154px;font-size:24.50px;line-height:29px;color:#d8d8d8;white-space:pre;transform-origin:0 0;transform:scaleX(1.0494);">Connection</span>
<span style="position:absolute;left:190.48px;top:154px;font-size:24.50px;line-height:29px;color:#d8d8d8;white-space:pre;transform-origin:0 0;transform:scaleX(1.0102);">Recorder</span>
<span style="position:absolute;left:330.30px;top:154px;font-size:24.20px;line-height:29px;color:#ffffff;white-space:pre;transform-origin:0 0;transform:scaleX(0.9701);">FC0013</span>
<span style="position:absolute;left:22.50px;top:211px;font-size:25.00px;line-height:30px;color:#fff;white-space:pre;transform-origin:0 0;transform:scaleX(0.9577);">AGC</span>
<div style="position:absolute;left:163.00px;top:215.00px;width:20.00px;height:20.00px;background:#e2e2e2;border-radius:50%;"></div>
<span style="position:absolute;left:188.46px;top:214px;font-size:24.50px;line-height:29px;color:#fff;white-space:pre;transform-origin:0 0;transform:scaleX(1.0423);">On/Off</span>
<span style="position:absolute;left:21.19px;top:269px;font-size:25.00px;line-height:30px;color:#fff;white-space:pre;transform-origin:0 0;transform:scaleX(1.0448);">Gain</span>
<div style="position:absolute;left:163.50px;top:277.00px;width:311.50px;height:3.00px;background:#e4e4e4;border-radius:2px;"></div>
<div class="thumb" style="left:472.80px;top:269.60px;width:18.4px;height:18.4px"></div>
</section>
<section id="spectrum-controls">
<div style="position:absolute;left:563.65px;top:1.75px;width:19.50px;height:19.50px;background:#e2e2e2;border-radius:50%;"></div>
<span style="position:absolute;left:588.20px;top:3px;font-size:17.50px;line-height:21px;color:#fff;white-space:pre;transform-origin:0 0;transform:scaleX(0.9638);">Freeze</span>
<div style="position:absolute;left:670.25px;top:1.75px;width:19.50px;height:19.50px;background:#e2e2e2;border-radius:50%;"></div>
<svg style="position:absolute;left:670.0px;top:1.5px" width="20" height="20" viewBox="-10 -10 20 20"><path d="M-3.6-3.6L3.6 3.6M3.6-3.6L-3.6 3.6" stroke="#444" stroke-width="3.1" stroke-linecap="round"/></svg>
<span style="position:absolute;left:695.23px;top:3px;font-size:17.50px;line-height:21px;color:#fff;white-space:pre;transform-origin:0 0;transform:scaleX(1.0309);">Gradient</span>
<span style="position:absolute;left:570.22px;top:64px;font-size:17.50px;line-height:21px;color:#fff;white-space:pre;transform-origin:0 0;transform:scaleX(1.0335);">Smoothing Level</span>
<div style="position:absolute;left:573.15px;top:92.00px;width:1.50px;height:6.00px;background:#a8a8a8;"></div>
<div style="position:absolute;left:592.82px;top:93.50px;width:1.50px;height:4.50px;background:#a8a8a8;"></div>
<div style="position:absolute;left:612.49px;top:93.50px;width:1.50px;height:4.50px;background:#a8a8a8;"></div>
<div style="position:absolute;left:632.16px;top:93.50px;width:1.50px;height:4.50px;background:#a8a8a8;"></div>
<div style="position:absolute;left:651.83px;top:93.50px;width:1.50px;height:4.50px;background:#a8a8a8;"></div>
<div style="position:absolute;left:671.50px;top:93.50px;width:1.50px;height:4.50px;background:#a8a8a8;"></div>
<div style="position:absolute;left:691.17px;top:93.50px;width:1.50px;height:4.50px;background:#a8a8a8;"></div>
<div style="position:absolute;left:710.84px;top:93.50px;width:1.50px;height:4.50px;background:#a8a8a8;"></div>
<div style="position:absolute;left:730.51px;top:93.50px;width:1.50px;height:4.50px;background:#a8a8a8;"></div>
<div style="position:absolute;left:750.18px;top:93.50px;width:1.50px;height:4.50px;background:#a8a8a8;"></div>
<div style="position:absolute;left:769.85px;top:92.00px;width:1.50px;height:6.00px;background:#a8a8a8;"></div>
<div style="position:absolute;left:563.70px;top:107.10px;width:213.80px;height:3.00px;background:#e4e4e4;border-radius:2px;"></div>
<span style="position:absolute;left:570.69px;top:160px;font-size:17.50px;line-height:21px;color:#fff;white-space:pre;transform-origin:0 0;transform:scaleX(1.0281);">Zoom X</span>
<div style="position:absolute;left:563.70px;top:197.30px;width:213.80px;height:3.00px;background:#e4e4e4;border-radius:2px;"></div>
<div class="thumb" style="left:565.20px;top:189.90px;width:18.4px;height:18.4px"></div>
<span style="position:absolute;left:570.70px;top:250px;font-size:17.50px;line-height:21px;color:#fff;white-space:pre;transform-origin:0 0;transform:scaleX(1.0075);">Zoom Y</span>
<div class="thumb" style="left:643.30px;top:99.60px;width:18.4px;height:18.4px"></div>
<div style="position:absolute;left:564.00px;top:287.00px;width:213.50px;height:3.00px;background:#e4e4e4;border-radius:2px;"></div>
<div class="thumb" style="left:565.40px;top:279.60px;width:18.4px;height:18.4px"></div>
<div style="position:absolute;left:802.00px;top:-5.00px;width:7.00px;height:218.00px;background:#a6a6a6;border-radius:4px;"></div>
</section>
<div id="splitters">
<div style="position:absolute;left:0.00px;top:299.00px;width:1656.00px;height:7.90px;background:#828282;"></div>
<div style="position:absolute;left:0.00px;top:306.90px;width:741.00px;height:58.10px;background:#303030;"></div>
<div style="position:absolute;left:745.00px;top:306.90px;width:911.00px;height:58.10px;background:#262626;"></div>
<div style="position:absolute;left:741.00px;top:306.50px;width:4.00px;height:59.50px;background:#ffffff;"></div>
<div style="position:absolute;left:0.00px;top:365.00px;width:1656.00px;height:2.00px;background:#f4f4f4;"></div>
</div>
<header id="ensemble-bar">
<div style="position:absolute;left:35.5px;top:319px;width:91px;height:46px;border:1px dotted #000;border-bottom:none;box-sizing:border-box"></div>
<div style="position:absolute;left:36px;top:322px;width:90px;height:33px;border:1px solid #8a8a8a;border-radius:4px;box-sizing:border-box"></div>
<span style="position:absolute;left:39.46px;top:327px;font-size:19.50px;line-height:23px;color:#fff;white-space:pre;transform-origin:0 0;transform:scaleX(0.9108);">10B</span>
<svg style="position:absolute;left:92px;top:333px" width="18" height="10" viewBox="0 0 18 10"><path d="M0.9 1h15.4l-7.7 8.2z" fill="#fff"/></svg>
<div style="position:absolute;left:141.00px;top:306.50px;width:1.00px;height:58.50px;background:#e8e8e8;"></div>
<span style="position:absolute;left:163.90px;top:326px;font-size:22.50px;line-height:27px;color:#ffffff;white-space:pre;transform-origin:0 0;transform:scaleX(1.0266);">EId: 1148</span>
<span style="position:absolute;left:289.98px;top:326px;font-size:22.50px;line-height:27px;color:#e9e91c;white-space:pre;transform-origin:0 0;transform:scaleX(1.1344);">rbb</span>
<span style="position:absolute;left:333.58px;top:326px;font-size:22.50px;line-height:27px;color:#e9e91c;white-space:pre;transform-origin:0 0;transform:scaleX(0.9803);">BRB/BLN K10B</span>
<div style="position:absolute;left:142.00px;top:306.50px;width:181.70px;height:58.50px;background:rgba(255,165,0,0.62);"></div>
<span style="position:absolute;left:517.65px;top:325px;font-size:23.00px;line-height:28px;color:#fff;white-space:pre;transform-origin:0 0;transform:scaleX(1.0514);">2022-03-28</span>
<div style="position:absolute;left:640px;top:307px;width:101px;height:58px;overflow:hidden"><span style="position:absolute;left:14.35px;top:18px;font-size:23.00px;line-height:28px;color:#fff;white-space:pre;transform-origin:0 0;">10:09:03</span></div>
<div style="position:absolute;left:760px;top:322px;width:38px;height:33px;border:1px solid #a09c98;border-radius:4px;box-sizing:border-box"></div>
<svg style="position:absolute;left:769px;top:333px" width="19" height="10" viewBox="0 0 19 10"><path d="M0.6 0.7h16.8l-8.4 8.4z" fill="#fff"/></svg>
<div style="position:absolute;left:832.70px;top:321.90px;width:35.00px;height:35.00px;background:#1d6094;border-radius:50%;"></div>
<div style="position:absolute;left:842.95px;top:332.15px;width:14.50px;height:14.50px;background:#ff0000;border-radius:50%;"></div>
<div style="position:absolute;left:884.70px;top:321.90px;width:35.00px;height:35.00px;background:#1f3f5e;border-radius:50%;"></div>
<div style="position:absolute;left:895.50px;top:332.50px;width:13.50px;height:14.00px;background:#101010;"></div>
</header>
<nav id="service-list">
<div style="position:absolute;left:0.00px;top:367.00px;width:290.00px;height:51.00px;background:#11305a;"></div>
<div style="position:absolute;left:0.00px;top:417.60px;width:290.00px;height:534.40px;background:#1b5785;"></div>
<span style="position:absolute;left:4.71px;top:375px;font-size:28.50px;line-height:34px;color:#ffff3c;white-space:pre;transform-origin:0 0;transform:scaleX(1.0199);">No Service Selected</span>
<span style="position:absolute;left:7.20px;top:426px;font-size:23.00px;line-height:28px;color:#fff;white-space:pre;transform-origin:0 0;transform:scaleX(1.0081);">Antenne CB</span>
<span style="position:absolute;left:7.20px;top:464px;font-size:23.00px;line-height:28px;color:#fff;white-space:pre;transform-origin:0 0;transform:scaleX(0.9960);">Antenne FFO</span>
<span style="position:absolute;left:7.20px;top:502px;font-size:23.00px;line-height:28px;color:#fff;white-space:pre;transform-origin:0 0;transform:scaleX(1.0231);">Antenne P</span>
<span style="position:absolute;left:7.20px;top:540px;font-size:23.00px;line-height:28px;color:#fff;white-space:pre;transform-origin:0 0;">Antenne PBG</span>
<span style="position:absolute;left:7.20px;top:578px;font-size:23.00px;line-height:28px;color:#fff;white-space:pre;transform-origin:0 0;">Antenne PZL</span>
<span style="position:absolute;left:6.22px;top:616px;font-size:23.00px;line-height:28px;color:#fff;white-space:pre;transform-origin:0 0;transform:scaleX(0.9847);">COSMO</span>
<span style="position:absolute;left:5.34px;top:654px;font-size:23.00px;line-height:28px;color:#fff;white-space:pre;transform-origin:0 0;transform:scaleX(1.0619);">Fritz</span>
<span style="position:absolute;left:5.00px;top:692px;font-size:23.00px;line-height:28px;color:#fff;white-space:pre;transform-origin:0 0;transform:scaleX(1.0986);">Inforadio</span>
<span style="position:absolute;left:5.61px;top:730px;font-size:23.00px;line-height:28px;color:#fff;white-space:pre;transform-origin:0 0;transform:scaleX(1.0618);">radio1</span>
<span style="position:absolute;left:5.67px;top:768px;font-size:23.00px;line-height:28px;color:#fff;white-space:pre;transform-origin:0 0;transform:scaleX(1.0175);">radio1 CB</span>
<span style="position:absolute;left:5.69px;top:806px;font-size:23.00px;line-height:28px;color:#fff;white-space:pre;transform-origin:0 0;transform:scaleX(1.0079);">radio1 FFO</span>
<span style="position:absolute;left:5.62px;top:844px;font-size:23.00px;line-height:28px;color:#fff;white-space:pre;transform-origin:0 0;transform:scaleX(1.0524);">rbb 88.8</span>
<span style="position:absolute;left:5.57px;top:882px;font-size:23.00px;line-height:28px;color:#fff;white-space:pre;transform-origin:0 0;transform:scaleX(1.0899);">rbbKultur</span>
<div style="position:absolute;left:290.00px;top:367.00px;width:8.00px;height:585.00px;background:#f2f2f2;"></div>
</nav>
<section id="service-quality">
<div style="position:absolute;left:298.00px;top:367.00px;width:272.00px;height:51.00px;background:#11305a;"></div>
<div style="position:absolute;left:298.00px;top:417.60px;width:272.00px;height:534.40px;background:#1b5785;"></div>
<span style="position:absolute;left:305.03px;top:375px;font-size:28.50px;line-height:34px;color:#fff;white-space:pre;transform-origin:0 0;transform:scaleX(1.0194);">Service Quality</span>
<div style="position:absolute;left:569.50px;top:367.00px;width:5.10px;height:585.00px;background:#0c2c56;"></div>
<div style="position:absolute;left:570.00px;top:367.00px;width:4.10px;height:585.00px;background:#bcc3d4;"></div>
<span style="position:absolute;left:312.89px;top:441px;font-size:20.50px;line-height:25px;color:#fff;white-space:pre;transform-origin:0 0;transform:scaleX(0.9407);">SNR (dB)</span>
<div style="position:absolute;left:493.00px;top:433.80px;width:60.00px;height:37.00px;background:#808080;"></div>
<div style="position:absolute;left:493.00px;top:433.80px;width:18.00px;height:37.00px;background:#ffa500;"></div>
<span style="position:absolute;left:506.82px;top:443px;font-size:18.00px;line-height:22px;color:#fff;white-space:pre;transform-origin:0 0;transform:scaleX(0.9455);">10,7</span>
<span style="position:absolute;left:312.15px;top:487px;font-size:20.50px;line-height:25px;color:#fff;white-space:pre;transform-origin:0 0;transform:scaleX(0.9648);">FIC (ok %)</span>
<div style="position:absolute;left:493.00px;top:479.95px;width:60.00px;height:37.00px;background:#808080;"></div>
<div style="position:absolute;left:493.00px;top:479.95px;width:60.00px;height:37.00px;background:#008000;"></div>
<span style="position:absolute;left:508.68px;top:489px;font-size:18.00px;line-height:22px;color:#fff;white-space:pre;transform-origin:0 0;transform:scaleX(0.9770);">100</span>
<span style="position:absolute;left:312.16px;top:533px;font-size:20.50px;line-height:25px;color:#fff;white-space:pre;transform-origin:0 0;transform:scaleX(0.9576);">RS (ok %)</span>
<div style="position:absolute;left:493.00px;top:526.10px;width:60.00px;height:37.00px;background:#808080;"></div>
<span style="position:absolute;left:312.03px;top:579px;font-size:20.50px;line-height:25px;color:#fff;white-space:pre;transform-origin:0 0;transform:scaleX(1.0460);">Null Symbol</span>
<div style="position:absolute;left:493.00px;top:572.25px;width:60.00px;height:37.00px;background:#808080;"></div>
<div style="position:absolute;left:493.00px;top:572.25px;width:60.00px;height:37.00px;background:#008000;"></div>
<span style="position:absolute;left:312.85px;top:625px;font-size:20.50px;line-height:25px;color:#fff;white-space:pre;transform-origin:0 0;">SymbolTime (ms)</span>
<div style="position:absolute;left:493.00px;top:618.40px;width:60.00px;height:37.00px;background:#808080;"></div>
<div style="position:absolute;left:493.00px;top:618.40px;width:15.00px;height:37.00px;background:#008000;"></div>
<span style="position:absolute;left:506.42px;top:627px;font-size:18.00px;line-height:22px;color:#fff;white-space:pre;transform-origin:0 0;transform:scaleX(0.9630);">0,37</span>
<span style="position:absolute;left:312.11px;top:671px;font-size:20.50px;line-height:25px;color:#fff;white-space:pre;transform-origin:0 0;transform:scaleX(0.9909);">FrameTime (ms)</span>
<div style="position:absolute;left:493.00px;top:664.55px;width:60.00px;height:37.00px;background:#808080;"></div>
<div style="position:absolute;left:493.00px;top:664.55px;width:38.00px;height:37.00px;background:#008000;"></div>
<span style="position:absolute;left:506.17px;top:673px;font-size:18.00px;line-height:22px;color:#fff;white-space:pre;transform-origin:0 0;transform:scaleX(0.9701);">95,9</span>
</section>
<section id="details-tabs">
<div style="position:absolute;left:574.30px;top:367.00px;width:409.00px;height:100.00px;background:#11305a;"></div>
<div style="position:absolute;left:574.30px;top:418.00px;width:9.70px;height:534.00px;background:#1b5785;"></div>
<div style="position:absolute;left:574.30px;top:467.00px;width:409.00px;height:485.00px;background:#1b5785;"></div>
<div class="tab b" style="left:586px;top:378.4px;width:183px;height:40.2px"></div>
<div class="tab b" style="left:770.4px;top:378.4px;width:213px;height:40.2px;border-radius:5px 0 0 0;border-right:none"></div>
<div class="tab b" style="left:586px;top:426.3px;width:138.4px;height:41px"></div>
<div class="tab b" style="left:725.4px;top:426.3px;width:113.6px;height:41.5px;background:#1b5785;border-color:#3573a4"></div>
<div class="tab b" style="left:840px;top:426.3px;width:144px;height:41px;border-radius:5px 0 0 0;border-right:none"></div>
<span style="position:absolute;left:655.00px;top:386px;font-size:25.00px;line-height:30px;color:#dcdcdc;white-space:pre;transform-origin:0 0;transform:scaleX(0.9426);">AAC</span>
<span style="position:absolute;left:838.46px;top:386px;font-size:25.00px;line-height:30px;color:#dcdcdc;white-space:pre;transform-origin:0 0;transform:scaleX(1.0414);">Options</span>
<span style="position:absolute;left:629.75px;top:434px;font-size:25.00px;line-height:30px;color:#dcdcdc;white-space:pre;transform-origin:0 0;transform:scaleX(0.9481);">Sync</span>
<span style="position:absolute;left:770.03px;top:434px;font-size:25.00px;line-height:30px;color:#fff;white-space:pre;transform-origin:0 0;transform:scaleX(0.9358);">TII</span>
<span style="position:absolute;left:885.50px;top:434px;font-size:25.00px;line-height:30px;color:#dcdcdc;white-space:pre;transform-origin:0 0;transform:scaleX(1.0397);">Audio</span>
<div style="position:absolute;left:626.20px;top:482.50px;width:14.00px;height:14.00px;background:#ff0000;border-radius:50%;"></div>
<div style="position:absolute;left:670.00px;top:482.20px;width:13.00px;height:14.40px;background:#11305a;"></div>
<div style="position:absolute;left:597.00px;top:511.20px;width:371.00px;height:1.60px;background:#9ec0de;"></div>
<span style="position:absolute;left:596.12px;top:539px;font-size:22.00px;line-height:26px;color:#fff;white-space:pre;transform-origin:0 0;transform:scaleX(1.0147);">Pattern</span>
<span style="position:absolute;left:696.84px;top:539px;font-size:22.00px;line-height:26px;color:#fff;white-space:pre;transform-origin:0 0;transform:scaleX(1.0635);">MainId</span>
<span style="position:absolute;left:796.29px;top:539px;font-size:22.00px;line-height:26px;color:#fff;white-space:pre;transform-origin:0 0;transform:scaleX(1.0118);">SubId</span>
<span style="position:absolute;left:883.47px;top:539px;font-size:22.00px;line-height:26px;color:#fff;white-space:pre;transform-origin:0 0;transform:scaleX(1.0296);">Strength</span>
<div style="position:absolute;left:597.00px;top:565.60px;width:371.00px;height:1.40px;background:#9ec0de;"></div>
<span style="position:absolute;left:599.77px;top:586px;font-size:18.80px;line-height:23px;color:#fff;white-space:pre;transform-origin:0 0;transform:scaleX(1.0581);">0x6c</span>
<span style="position:absolute;left:700.35px;top:586px;font-size:18.80px;line-height:23px;color:#fff;white-space:pre;transform-origin:0 0;transform:scaleX(1.0987);">30</span>
<span style="position:absolute;left:799.28px;top:586px;font-size:18.80px;line-height:23px;color:#fff;white-space:pre;transform-origin:0 0;transform:scaleX(1.0486);">3</span>
<span style="position:absolute;left:886.47px;top:586px;font-size:18.80px;line-height:23px;color:#fff;white-space:pre;transform-origin:0 0;transform:scaleX(1.0620);">0.94</span>
<div style="position:absolute;left:983.30px;top:367.00px;width:8.00px;height:585.00px;background:#f2f2f2;"></div>
</section>
<section id="cir-tii-panels">
<div style="position:absolute;left:991.30px;top:367.00px;width:664.70px;height:30.00px;background:#11305a;"></div>
<div style="position:absolute;left:991.30px;top:652.00px;width:664.70px;height:8.00px;background:#828282;"></div>
<div style="position:absolute;left:991.30px;top:660.00px;width:664.70px;height:29.00px;background:#11305a;"></div>
<div style="position:absolute;left:991.30px;top:944.30px;width:664.70px;height:7.70px;background:#828282;"></div>
<span style="position:absolute;left:1281.28px;top:368px;font-size:21.00px;line-height:25px;color:#fff;white-space:pre;transform-origin:0 0;transform:scaleX(1.0207);">Channel Impulse Response (CIR)</span>
<span style="position:absolute;left:1389.16px;top:662px;font-size:22.00px;line-height:26px;color:#fff;white-space:pre;transform-origin:0 0;transform:scaleX(0.9606);">TII Carriers</span>
<div style="position:absolute;left:1006.25px;top:414.45px;width:19.50px;height:19.50px;background:#e2e2e2;border-radius:50%;"></div>
<span style="position:absolute;left:1030.80px;top:415px;font-size:17.50px;line-height:21px;color:#fff;white-space:pre;transform-origin:0 0;transform:scaleX(0.9638);">Freeze</span>
<div style="position:absolute;left:1112.85px;top:414.45px;width:19.50px;height:19.50px;background:#e2e2e2;border-radius:50%;"></div>
<span style="position:absolute;left:1137.83px;top:415px;font-size:17.50px;line-height:21px;color:#fff;white-space:pre;transform-origin:0 0;transform:scaleX(1.0309);">Gradient</span>
<span style="position:absolute;left:1012.82px;top:477px;font-size:17.50px;line-height:21px;color:#fff;white-space:pre;transform-origin:0 0;transform:scaleX(1.0335);">Smoothing Level</span>
<div style="position:absolute;left:1015.75px;top:504.70px;width:1.50px;height:6.00px;background:#a8a8a8;"></div>
<div style="position:absolute;left:1035.42px;top:506.20px;width:1.50px;height:4.50px;background:#a8a8a8;"></div>
<div style="position:absolute;left:1055.09px;top:506.20px;width:1.50px;height:4.50px;background:#a8a8a8;"></div>
<div style="position:absolute;left:1074.76px;top:506.20px;width:1.50px;height:4.50px;background:#a8a8a8;"></div>
<div style="position:absolute;left:1094.43px;top:506.20px;width:1.50px;height:4.50px;background:#a8a8a8;"></div>
<div style="position:absolute;left:1114.10px;top:506.20px;width:1.50px;height:4.50px;background:#a8a8a8;"></div>
<div style="position:absolute;left:1133.77px;top:506.20px;width:1.50px;height:4.50px;background:#a8a8a8;"></div>
<div style="position:absolute;left:1153.44px;top:506.20px;width:1.50px;height:4.50px;background:#a8a8a8;"></div>
<div style="position:absolute;left:1173.11px;top:506.20px;width:1.50px;height:4.50px;background:#a8a8a8;"></div>
<div style="position:absolute;left:1192.78px;top:506.20px;width:1.50px;height:4.50px;background:#a8a8a8;"></div>
<div style="position:absolute;left:1212.45px;top:504.70px;width:1.50px;height:6.00px;background:#303030;"></div>
<div style="position:absolute;left:1006.30px;top:519.80px;width:206.10px;height:3.00px;background:#e4e4e4;border-radius:2px;"></div>
<span style="position:absolute;left:1013.29px;top:558px;font-size:17.50px;line-height:21px;color:#fff;white-space:pre;transform-origin:0 0;transform:scaleX(1.0281);">Zoom X</span>
<div style="position:absolute;left:1006.30px;top:595.00px;width:206.10px;height:3.00px;background:#e4e4e4;border-radius:2px;"></div>
<div class="thumb" style="left:1007.80px;top:587.60px;width:18.4px;height:18.4px"></div>
<span style="position:absolute;left:1013.30px;top:633px;font-size:17.50px;line-height:21px;color:#fff;white-space:pre;transform-origin:0 0;transform:scaleX(1.0075);">Zoom Y</span>
<div class="thumb" style="left:1046.50px;top:512.50px;width:18.4px;height:18.4px"></div>
<div style="position:absolute;left:1222.20px;top:399.00px;width:6.80px;height:148.00px;background:#a6a6a6;border-radius:4px;"></div>
<div style="position:absolute;left:0.00px;top:952.00px;width:1656.00px;height:30.00px;background:#042042;"></div>
<span style="position:absolute;left:1425.14px;top:955px;font-size:17.50px;line-height:21px;color:#fff;white-space:pre;transform-origin:0 0;transform:scaleX(1.0069);">Display Update Rate</span>
<div style="position:absolute;left:1611.00px;top:964.80px;width:49.00px;height:3.00px;background:#e4e4e4;border-radius:2px;"></div>
<div class="thumb" style="left:1602.00px;top:957.40px;width:18.4px;height:18.4px"></div>
</section>
</body></html>
